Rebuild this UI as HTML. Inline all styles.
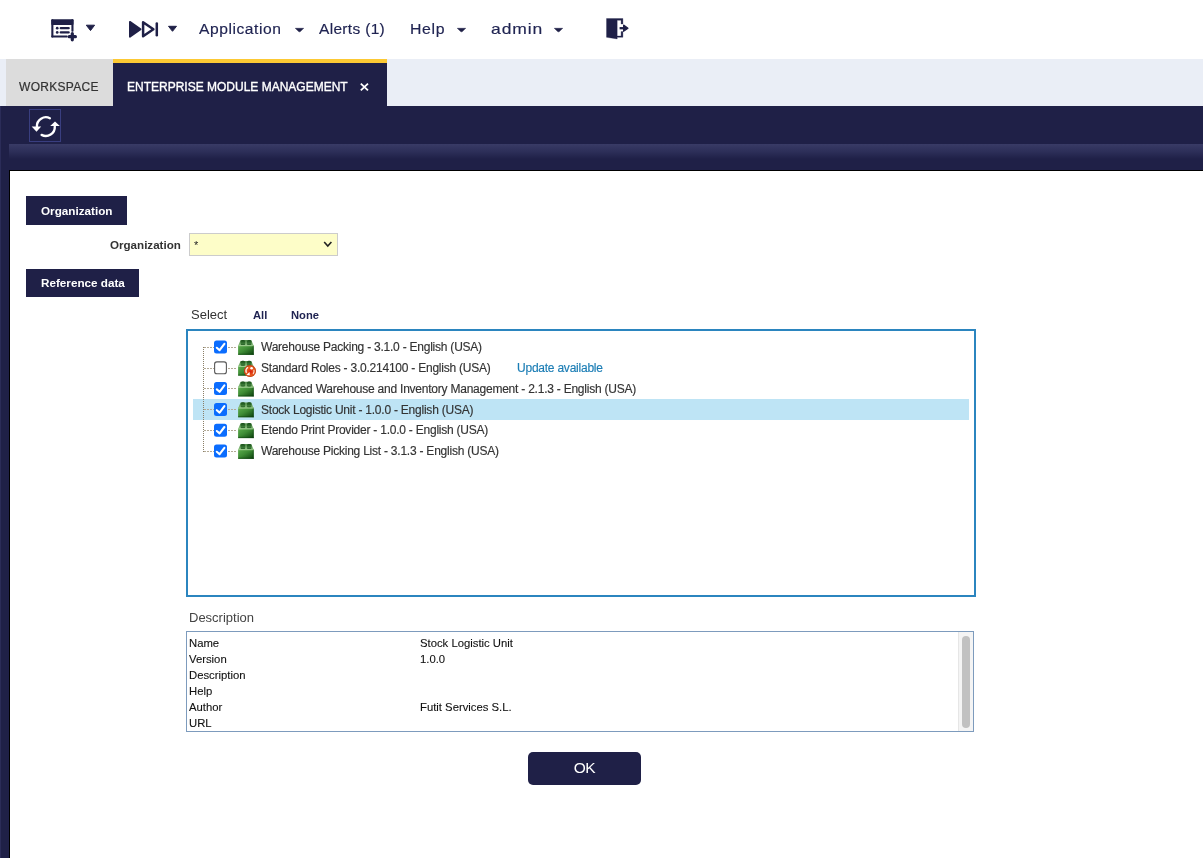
<!DOCTYPE html>
<html><head><meta charset="utf-8">
<style>
*{box-sizing:border-box;margin:0;padding:0}
html,body{width:1203px;height:858px;overflow:hidden;background:#fff;font-family:"Liberation Sans",sans-serif}
#root{position:absolute;left:0;top:0;width:1203px;height:858px;will-change:transform}
.abs{position:absolute}
.nav{color:#202452;-webkit-text-stroke:0.15px #202452;font-size:14px;letter-spacing:1px;white-space:nowrap;line-height:16px}
#tabbar{left:0;top:59px;width:1203px;height:47px;background:#eaeef6}
#ws{left:6px;top:59px;width:107px;height:47px;background:#dcdcdc}
#act{left:113px;top:59px;width:274px;height:47px;background:#1f2047;border-top:4px solid #fcc934}
#dark{left:0;top:106px;width:1203px;height:752px;background:#1f2047}
#refbox{left:29px;top:109px;width:32px;height:33px;border:1px solid #393e80}
#grad{left:9px;top:144px;width:1194px;height:26px;background:linear-gradient(#393b66 0px,#2c2e58 8px,#1f2047 15px,#1f2047 26px)}
#white{left:9px;top:170px;width:1194px;height:688px;background:#fff;border-top:1px solid #000;border-left:1px solid #000}
.sect{background:#1f2047;color:#fff;font-weight:bold;font-size:11.7px;height:28px;line-height:28px;padding-left:15px;white-space:nowrap}
.tree{font-size:12px;letter-spacing:-0.23px;color:#333;-webkit-text-stroke:0.15px currentColor;white-space:nowrap;line-height:14px}
.desc{font-size:11.3px;color:#111;-webkit-text-stroke:0.1px #111;white-space:nowrap;line-height:14px}
svg.full{position:absolute;left:0;top:0;width:1203px;height:858px}
</style></head><body><div id="root">
<div id="tabbar" class="abs"></div>
<div id="ws" class="abs"></div>
<div class="abs" style="left:19px;top:80px;font-size:12px;color:#333;-webkit-text-stroke:0.2px #333;letter-spacing:0.3px;line-height:14px">WORKSPACE</div>
<div id="act" class="abs"></div>
<div class="abs" style="left:127px;top:80px;font-size:12px;color:#fff;-webkit-text-stroke:0.35px #fff;line-height:14px">ENTERPRISE MODULE MANAGEMENT</div>
<div id="dark" class="abs"></div>
<div id="refbox" class="abs"></div>
<div class="abs" style="left:0;top:106px;width:1px;height:752px;background:#2b2c58"></div>
<div id="grad" class="abs"></div>
<div id="white" class="abs"></div>

<!-- top nav -->
<div class="abs nav" style="left:199px;top:21px;letter-spacing:0.5px;transform:scaleX(1.115);transform-origin:0 0">Application</div>
<div class="abs nav" style="left:319px;top:21px;letter-spacing:0.3px;transform:scaleX(1.105);transform-origin:0 0">Alerts (1)</div>
<div class="abs nav" style="left:410px;top:21px;letter-spacing:0.6px;transform:scaleX(1.13);transform-origin:0 0">Help</div>
<div class="abs nav" style="left:491px;top:21px;font-size:15px;letter-spacing:0.8px;transform:scaleX(1.165);transform-origin:0 0">admin</div>

<div class="abs sect" style="left:26px;top:196px;width:101px;height:29px;line-height:29.5px">Organization</div>
<div class="abs" style="left:110px;top:238px;font-size:11.6px;font-weight:bold;color:#333;line-height:14px">Organization</div>
<div class="abs" style="left:189px;top:233px;width:149px;height:23px;background:#fdfdc8;border:1px solid #ccc"></div>
<div class="abs" style="left:194px;top:238px;font-size:11px;color:#222;line-height:14px">*</div>
<div class="abs sect" style="left:26px;top:269px;width:113px">Reference data</div>

<div class="abs" style="left:191px;top:307px;font-size:13px;color:#333;line-height:15px">Select</div>
<div class="abs" style="left:253px;top:308px;font-size:11.2px;font-weight:bold;color:#202452;line-height:14px">All</div>
<div class="abs" style="left:291px;top:308px;font-size:11.2px;font-weight:bold;color:#202452;line-height:14px">None</div>

<div class="abs" style="left:186px;top:329px;width:790px;height:268px;border:2px solid #2b85bf"></div>
<div class="abs tree" style="left:261px;top:340.2px">Warehouse Packing - 3.1.0 - English (USA)</div>
<div class="abs tree" style="left:261px;top:361.0px">Standard Roles - 3.0.214100 - English (USA)</div>
<div class="abs tree" style="left:517px;top:361.0px;color:#1b7db5">Update available</div>
<div class="abs tree" style="left:261px;top:381.8px">Advanced Warehouse and Inventory Management - 2.1.3 - English (USA)</div>
<div class="abs" style="left:193px;top:399.2px;width:776px;height:21px;background:#bee4f5"></div>
<div class="abs tree" style="left:261px;top:402.6px">Stock Logistic Unit - 1.0.0 - English (USA)</div>
<div class="abs tree" style="left:261px;top:423.4px">Etendo Print Provider - 1.0.0 - English (USA)</div>
<div class="abs tree" style="left:261px;top:444.2px">Warehouse Picking List - 3.1.3 - English (USA)</div>

<div class="abs" style="left:189px;top:610px;font-size:13px;color:#444;line-height:15px">Description</div>
<div class="abs" style="left:186px;top:631px;width:788px;height:101px;border:1px solid #7d9bbd"></div>
<div class="abs" style="left:958px;top:632px;width:15px;height:99px;background:#f4f4f4;border-left:1px solid #e6e6e6"></div>
<div class="abs" style="left:962px;top:636px;width:8px;height:92px;background:#c1c1c1;border-radius:4px"></div>
<div class="abs desc" style="left:189px;top:635px;line-height:16px">Name<br>Version<br>Description<br>Help<br>Author<br>URL</div>
<div class="abs desc" style="left:420px;top:635px;line-height:16px">Stock Logistic Unit<br>1.0.0<br><br><br>Futit Services S.L.</div>

<div class="abs" style="left:528px;top:752px;width:113px;height:33px;background:#1f2047;border-radius:5px;color:#fff;font-size:15.5px;text-align:center;line-height:31px;letter-spacing:-0.5px">OK</div>

<svg class="full" viewBox="0 0 1203 858">
<defs>
  <linearGradient id="lg" x1="0" y1="0" x2="1" y2="1">
    <stop offset="0" stop-color="#5fae4f"/>
    <stop offset="0.45" stop-color="#3e8c35"/>
    <stop offset="1" stop-color="#0a3f0b"/>
  </linearGradient>
  <linearGradient id="lgt" x1="0" y1="0" x2="0" y2="1">
    <stop offset="0" stop-color="#4f8a48"/>
    <stop offset="1" stop-color="#8fc483"/>
  </linearGradient>
  <linearGradient id="lstud" x1="0" y1="0" x2="0" y2="1">
    <stop offset="0" stop-color="#1b4f1c"/>
    <stop offset="0.45" stop-color="#2c6a2a"/>
    <stop offset="0.6" stop-color="#3f7d3a"/>
    <stop offset="1" stop-color="#245a24"/>
  </linearGradient>
  <radialGradient id="rg" cx="0.55" cy="0.55" r="0.6">
    <stop offset="0" stop-color="#d8200c"/>
    <stop offset="0.6" stop-color="#ee6420"/>
    <stop offset="1" stop-color="#c84a1c"/>
  </radialGradient>
  <g id="lego">
    <path d="M0.2 5 L2.6 -0.4 H13.2 L15.6 5 Z" fill="url(#lgt)"/>
    <rect x="2.6" y="-0.6" width="4.6" height="5.4" rx="1.6" fill="url(#lstud)"/>
    <rect x="8.9" y="-0.6" width="4.6" height="5.4" rx="1.6" fill="url(#lstud)"/>
    <rect x="0.1" y="4.6" width="15.7" height="9.8" fill="url(#lg)"/>
    <rect x="0.1" y="4.6" width="15.7" height="1.1" fill="#b8dcaa" opacity="0.75"/>
    <rect x="0.1" y="13.2" width="15.7" height="1.2" fill="#0c3f0e" opacity="0.45"/>
    <rect x="14.6" y="5.4" width="1.2" height="9" fill="#0c3f0e" opacity="0.35"/>
  </g>
  <g id="badge">
    <circle cx="6" cy="6" r="6" fill="url(#rg)"/>
    <circle cx="6" cy="6" r="5.5" fill="none" stroke="#b83816" stroke-width="1" opacity="0.7"/>
    <path d="M3.6 2.6 A4.3 4.3 0 0 0 2.2 7.4" fill="none" stroke="#fff" stroke-width="1.3" stroke-linecap="round" opacity="0.9"/>
    <circle cx="7.6" cy="3.3" r="1.3" fill="#fff"/>
    <path d="M9.9 5.2 A4.3 4.3 0 0 1 9.3 8.6" fill="none" stroke="#fff" stroke-width="1.1" stroke-linecap="round" opacity="0.8"/>
    <path d="M2.4 9.9 L5.6 7 L5.8 10.3 Z" fill="#fff"/>
  </g>
</defs>
<!-- nav icon 1 -->
<g fill="#1f2047">
  <rect x="51.3" y="19.3" width="22.2" height="5.6" rx="1"/>
  <rect x="51.3" y="19.3" width="2.1" height="18.3" rx="0.8"/>
  <rect x="51.3" y="35.6" width="16.4" height="2" rx="0.8"/>
  <rect x="71.4" y="19.3" width="2.1" height="12.4" rx="0.6"/>
  <circle cx="57.2" cy="28.2" r="1.35"/>
  <circle cx="57.2" cy="32.4" r="1.35"/>
  <rect x="59.6" y="27.1" width="10.2" height="2.2" rx="1.1"/>
  <rect x="59.6" y="31.3" width="10.2" height="2.2" rx="1.1"/>
</g>
<path d="M72.3 33.6 V39.8 M69.2 36.7 H75.4" stroke="#1f2047" stroke-width="3.2" stroke-linecap="round"/>
<path d="M86.3 25.2 H94.6 L90.5 30.6 Z" fill="#1f2047" stroke="#1f2047" stroke-width="1" stroke-linejoin="round"/>
<!-- nav icon 2 -->
<path d="M129.9 21.8 L140.6 29.2 L129.9 36.7 Z" fill="#1f2047" stroke="#1f2047" stroke-width="1.8" stroke-linejoin="round"/>
<path d="M143.1 22.3 L153.4 29.2 L143.1 36.2 Z" fill="none" stroke="#1f2047" stroke-width="2.5" stroke-linejoin="round"/>
<path d="M156.8 23.4 V35.2" stroke="#1f2047" stroke-width="2.5" stroke-linecap="round"/>
<path d="M168.5 26.3 H176.5 L172.5 31.3 Z" fill="#1f2047" stroke="#1f2047" stroke-width="1" stroke-linejoin="round"/>
<!-- small carets -->
<path d="M295.3 28.3 H303.7 L300 31.8 H299 Z" fill="#1f2047" stroke="#1f2047" stroke-width="0.5" stroke-linejoin="round"/>
<path d="M457.3 28.3 H465.7 L462 31.8 H461 Z" fill="#1f2047" stroke="#1f2047" stroke-width="0.5" stroke-linejoin="round"/>
<path d="M554.3 28.3 H562.7 L559 31.8 H558 Z" fill="#1f2047" stroke="#1f2047" stroke-width="0.5" stroke-linejoin="round"/>
<!-- logout -->
<path d="M606.5 18.5 H622.9 V24 H621.1 V20.3 H617.2 V36 H621.1 V31.6 H622.9 V37.3 H617.2 V38.9 L606.5 37.3 Z" fill="#1f2047" stroke="#1f2047" stroke-width="0.3" stroke-linejoin="round"/>
<path d="M619.6 28.2 H625" stroke="#1f2047" stroke-width="2.3"/>
<path d="M623.6 25.1 L628 28.2 L623.6 31.3 Z" fill="#1f2047" stroke="#1f2047" stroke-width="1.2" stroke-linejoin="round"/>
<!-- refresh -->
<g fill="none" stroke="#fff" stroke-width="2.35" stroke-linecap="round">
  <path d="M49.9 118.2 A9 9 0 0 0 36.9 126.5"/>
  <path d="M41.6 134.9 A9 9 0 0 0 54.8 126.5"/>
</g>
<path d="M31.7 126.6 H41.2 L36.5 131.8 Z" fill="#fff"/>
<path d="M50.2 126 H59.8 L55 121.4 Z" fill="#fff"/>
<!-- tab close x -->
<path d="M360.8 83.6 L368 90.4 M368 83.6 L360.8 90.4" stroke="#fff" stroke-width="1.8"/>
<!-- select chevron -->
<path d="M324.2 242 L327.8 246 L331.4 242" fill="none" stroke="#222" stroke-width="1.6"/>
<line x1="203.5" y1="347" x2="203.5" y2="452" stroke="#8a7e66" stroke-width="1" stroke-dasharray="1 1"/>
<line x1="204" y1="347.5" x2="214" y2="347.5" stroke="#b3aa96" stroke-width="1" stroke-dasharray="2 1"/>
<line x1="228" y1="347.5" x2="236" y2="347.5" stroke="#b3aa96" stroke-width="1" stroke-dasharray="2 1"/>
<rect x="214" y="340.5" width="13" height="13" rx="2.5" fill="#0b6dfe"/>
<path d="M216.8 347.8 L219.6 350.2 L224.4 343.8" fill="none" stroke="#fff" stroke-width="2.1" stroke-linecap="round" stroke-linejoin="round"/>
<use href="#lego" x="238" y="340.5"/>
<line x1="204" y1="368.5" x2="214" y2="368.5" stroke="#b3aa96" stroke-width="1" stroke-dasharray="2 1"/>
<line x1="228" y1="368.5" x2="236" y2="368.5" stroke="#b3aa96" stroke-width="1" stroke-dasharray="2 1"/>
<rect x="214.6" y="361.9" width="11.8" height="11.8" rx="2.3" fill="#fff" stroke="#5a5a5a" stroke-width="1.1"/>
<use href="#lego" x="238" y="361.3"/>
<use href="#badge" x="244" y="365.0"/>
<line x1="204" y1="388.5" x2="214" y2="388.5" stroke="#b3aa96" stroke-width="1" stroke-dasharray="2 1"/>
<line x1="228" y1="388.5" x2="236" y2="388.5" stroke="#b3aa96" stroke-width="1" stroke-dasharray="2 1"/>
<rect x="214" y="382.1" width="13" height="13" rx="2.5" fill="#0b6dfe"/>
<path d="M216.8 389.4 L219.6 391.8 L224.4 385.4" fill="none" stroke="#fff" stroke-width="2.1" stroke-linecap="round" stroke-linejoin="round"/>
<use href="#lego" x="238" y="382.1"/>
<line x1="204" y1="409.5" x2="214" y2="409.5" stroke="#b3aa96" stroke-width="1" stroke-dasharray="2 1"/>
<line x1="228" y1="409.5" x2="236" y2="409.5" stroke="#b3aa96" stroke-width="1" stroke-dasharray="2 1"/>
<rect x="214" y="402.9" width="13" height="13" rx="2.5" fill="#0b6dfe"/>
<path d="M216.8 410.2 L219.6 412.6 L224.4 406.2" fill="none" stroke="#fff" stroke-width="2.1" stroke-linecap="round" stroke-linejoin="round"/>
<use href="#lego" x="238" y="402.9"/>
<line x1="204" y1="430.5" x2="214" y2="430.5" stroke="#b3aa96" stroke-width="1" stroke-dasharray="2 1"/>
<line x1="228" y1="430.5" x2="236" y2="430.5" stroke="#b3aa96" stroke-width="1" stroke-dasharray="2 1"/>
<rect x="214" y="423.7" width="13" height="13" rx="2.5" fill="#0b6dfe"/>
<path d="M216.8 431.0 L219.6 433.4 L224.4 427.0" fill="none" stroke="#fff" stroke-width="2.1" stroke-linecap="round" stroke-linejoin="round"/>
<use href="#lego" x="238" y="423.7"/>
<line x1="204" y1="451.5" x2="214" y2="451.5" stroke="#b3aa96" stroke-width="1" stroke-dasharray="2 1"/>
<line x1="228" y1="451.5" x2="236" y2="451.5" stroke="#b3aa96" stroke-width="1" stroke-dasharray="2 1"/>
<rect x="214" y="444.5" width="13" height="13" rx="2.5" fill="#0b6dfe"/>
<path d="M216.8 451.8 L219.6 454.2 L224.4 447.8" fill="none" stroke="#fff" stroke-width="2.1" stroke-linecap="round" stroke-linejoin="round"/>
<use href="#lego" x="238" y="444.5"/>
</svg>
</div></body></html>
